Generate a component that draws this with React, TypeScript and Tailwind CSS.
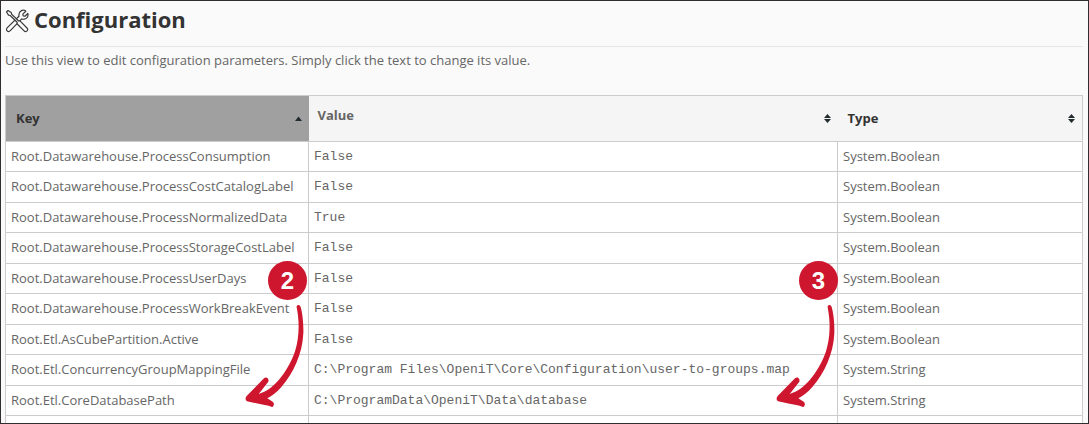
import { useState } from "react";

interface Parameter {
  key: string;
  value: string;
  type: string;
}

const parameters: Parameter[] = [
  { key: "Root.Datawarehouse.ProcessConsumption", value: "False", type: "System.Boolean" },
  { key: "Root.Datawarehouse.ProcessCostCatalogLabel", value: "False", type: "System.Boolean" },
  { key: "Root.Datawarehouse.ProcessNormalizedData", value: "True", type: "System.Boolean" },
  { key: "Root.Datawarehouse.ProcessStorageCostLabel", value: "False", type: "System.Boolean" },
  { key: "Root.Datawarehouse.ProcessUserDays", value: "False", type: "System.Boolean" },
  { key: "Root.Datawarehouse.ProcessWorkBreakEvent", value: "False", type: "System.Boolean" },
  { key: "Root.Etl.AsCubePartition.Active", value: "False", type: "System.Boolean" },
  { key: "Root.Etl.ConcurrencyGroupMappingFile", value: "C:\\Program Files\\OpeniT\\Core\\Configuration\\user-to-groups.map", type: "System.String" },
  { key: "Root.Etl.CoreDatabasePath", value: "C:\\ProgramData\\OpeniT\\Data\\database", type: "System.String" },
];

function ToolsIcon() {
  return (
    <svg viewBox="0 0 24 24" className="mt-[2px] h-6 w-6 shrink-0" fill="#fafafa" stroke="#3a3a3a" strokeWidth="1.2" strokeLinejoin="round" aria-hidden="true">
      {/* wrench */}
      <path d="M20.8 2.2 17.8 5.1 18.2 7 20 7.2 22.8 4.5C23.6 7.2 22 9.9 19.2 10.2 18.2 10.4 17.4 10.1 16.7 9.9L5.3 21.7C4.4 22.6 3 22.8 2.1 21.9 1.2 21 1.4 19.6 2.3 18.7L14 7.3C13.4 4 15.6 1 18.7 1.2 19.6 1.2 20.2 1.6 20.8 2.2Z" />
      {/* screwdriver */}
      <path d="M1.5 3 3 1.5 6.2 3.4 6.6 5.1 13.4 11.8 15 11.9 22 19C22.9 20 22.9 21 22 21.9 21 22.8 20 22.8 19.1 21.9L12.2 15 12.1 13.2 5.2 6.5 3.5 6.1Z" />
    </svg>
  );
}

function SortIcon({ direction }: { direction?: "asc" }) {
  return (
    <svg viewBox="0 0 7 9" className="h-[9px] w-[7px] shrink-0" fill="#222b2e" aria-hidden="true">
      {direction === "asc" ? (
        <path d="M3.5 2.5 7 7H0Z" />
      ) : (
        <path d="M3.5 0 7 4H0ZM0 5h7L3.5 9Z" />
      )}
    </svg>
  );
}

function Step({ number }: { number: number }) {
  return (
    <div className="w-16">
      <div className="ml-[23px] flex h-[39px] w-[39px] items-center justify-center rounded-full bg-[#ce162e] font-['Liberation_Sans',sans-serif] text-2xl font-bold text-white">
        {number}
      </div>
      <svg viewBox="45 159 192 315" className="mt-[3px] h-[105px] w-16" fill="#ce162e" aria-hidden="true">
        <path d="M200 172C198 164 209 161 212 171C218 191 221 224 220 250C217 312 191 369 154 411C140 427 126 438 112 445L128 455C134 460 132 469 126 471L116 467C92 463 70 458 51 454C46 451 45 443 50 438L102 385C109 379 118 386 115 395L86 432C138 418 178 354 195 304C208 263 209 217 200 172Z" />
      </svg>
    </div>
  );
}

export default function App() {
  const [rows, setRows] = useState(parameters);

  const handleEdit = (key: string, value: string) => {
    setRows(rows.map((row) => (row.key === key ? { ...row, value } : row)));
  };

  return (
    <main className="h-screen overflow-hidden border border-[#302c30] bg-[#fafafa] pl-1 pr-[5px] font-['Open_Sans',sans-serif] text-[13px] leading-5 text-[#666]">
      <header className="flex h-[46px] items-center gap-[5px] border-b border-[#e6e6e6] pb-2">
        <ToolsIcon />
        <h1 className="pb-[2px] text-[22px] font-bold leading-8 text-[#333]">Configuration</h1>
      </header>
      <p className="pt-[3px]">Use this view to edit configuration parameters. Simply click the text to change its value.</p>

      <div className="relative mt-[25px]">
        <table className="w-full table-fixed border-collapse border border-[#ccc] bg-white text-left">
          <thead>
            <tr className="h-[46px] border-b border-[#ccc] bg-[#f5f5f5] text-[#333]">
              <th className="w-[303px] bg-[#a0a0a0] p-0" aria-sort="ascending">
                <button className="flex w-full items-center justify-between pl-[10px] pr-[7px] font-bold">
                  <span className="pb-[2px]">Key</span>
                  <SortIcon direction="asc" />
                </button>
              </th>
              <th className="p-0 text-[#666]">
                <button className="flex w-full items-center justify-between pl-[9px] pr-[7px] font-bold">
                  <span className="pb-2">Value</span>
                  <SortIcon />
                </button>
              </th>
              <th className="w-[245px] p-0">
                <button className="flex w-full items-center justify-between pl-[10px] pr-[7px] font-bold">
                  <span className="pb-[2px]">Type</span>
                  <SortIcon />
                </button>
              </th>
            </tr>
          </thead>
          <tbody>
            {rows.map((row) => (
              <tr key={row.key} className="odd:h-[30px] even:h-[31px]">
                <td className="border border-[#ccc] px-[5px] pb-[2px] pt-0">{row.key}</td>
                <td className="border border-[#ccc] px-[5px] py-0 font-['Liberation_Mono',monospace]">
                  <span
                    contentEditable
                    suppressContentEditableWarning
                    onBlur={(e) => handleEdit(row.key, e.currentTarget.textContent ?? "")}
                  >
                    {row.value}
                  </span>
                </td>
                <td className="border border-[#ccc] px-[5px] pb-[2px] pt-0">{row.type}</td>
              </tr>
            ))}
            <tr className="h-[31px]">
              <td className="border border-[#ccc]" />
              <td className="border border-[#ccc]" />
              <td className="border border-[#ccc]" />
            </tr>
          </tbody>
        </table>

        {/* Walkthrough markers */}
        <div className="absolute left-[240px] top-[166px]">
          <Step number={2} />
        </div>
        <div className="absolute right-[243px] top-[166px]">
          <Step number={3} />
        </div>
      </div>
    </main>
  );
}
